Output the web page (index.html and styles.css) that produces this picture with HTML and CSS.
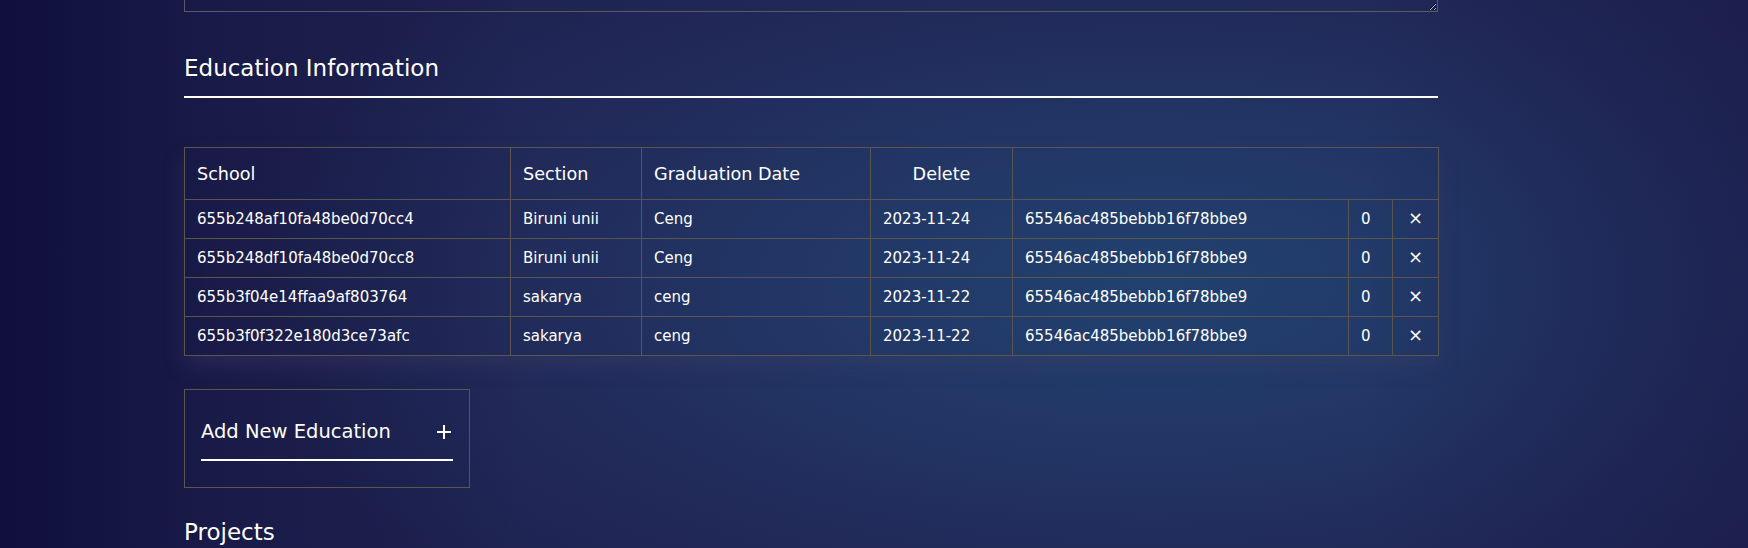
FILE: index.html
```html
<!DOCTYPE html>
<html lang="en">
<head>
<meta charset="utf-8">
<title>Education Information</title>
<link rel="stylesheet" href="styles.css">
</head>
<body>
<main class="page">
  <textarea class="notes" aria-label="Notes"></textarea>

  <h2 class="section-title">Education Information</h2>

  <table class="edu-table">
    <colgroup>
      <col class="c-school">
      <col class="c-section">
      <col class="c-grad">
      <col class="c-delete">
      <col class="c-user">
      <col class="c-count">
      <col class="c-x">
    </colgroup>
    <thead>
      <tr>
        <th>School</th>
        <th>Section</th>
        <th>Graduation Date</th>
        <th class="center">Delete</th>
        <th colspan="3"></th>
      </tr>
    </thead>
    <tbody>
      <tr>
        <td>655b248af10fa48be0d70cc4</td>
        <td>Biruni unii</td>
        <td>Ceng</td>
        <td>2023-11-24</td>
        <td>65546ac485bebbb16f78bbe9</td>
        <td>0</td>
        <td class="center"><span class="del">×</span></td>
      </tr>
      <tr>
        <td>655b248df10fa48be0d70cc8</td>
        <td>Biruni unii</td>
        <td>Ceng</td>
        <td>2023-11-24</td>
        <td>65546ac485bebbb16f78bbe9</td>
        <td>0</td>
        <td class="center"><span class="del">×</span></td>
      </tr>
      <tr>
        <td>655b3f04e14ffaa9af803764</td>
        <td>sakarya</td>
        <td>ceng</td>
        <td>2023-11-22</td>
        <td>65546ac485bebbb16f78bbe9</td>
        <td>0</td>
        <td class="center"><span class="del">×</span></td>
      </tr>
      <tr>
        <td>655b3f0f322e180d3ce73afc</td>
        <td>sakarya</td>
        <td>ceng</td>
        <td>2023-11-22</td>
        <td>65546ac485bebbb16f78bbe9</td>
        <td>0</td>
        <td class="center"><span class="del">×</span></td>
      </tr>
    </tbody>
  </table>

  <div class="add-box">
    <div class="add-btn">
      <span class="add-label">Add New Education</span>
      <svg class="plus" width="16" height="16" viewBox="0 0 16 16" aria-hidden="true">
        <line x1="8" y1="1" x2="8" y2="15" stroke="#fff" stroke-width="2"/>
        <line x1="1" y1="8" x2="15" y2="8" stroke="#fff" stroke-width="2"/>
      </svg>
    </div>
  </div>

  <h2 class="section-title plain">Projects</h2>
</main>
</body>
</html>
```

FILE: styles.css
```css
html, body {
  margin: 0;
  padding: 0;
  height: 100%;
  overflow: hidden;
}

body {
  font-family: "DejaVu Sans", "Liberation Sans", sans-serif;
  color: #ffffff;
  background-color: #1b1d4b;
  background-image:
    linear-gradient(90deg, rgba(14, 12, 55, 0.85) 0%, rgba(14, 12, 55, 0.35) 12%, rgba(14, 12, 55, 0) 30%, rgba(14, 12, 55, 0) 78%, rgba(24, 24, 70, 0.45) 100%),
    radial-gradient(ellipse 55% 75% at 66% 52%, #21416f 0%, #223766 35%, #212a59 70%, #1e2250 100%);
}

.page {
  padding-left: 184px;
  width: 1254px;
  display: flex;
  flex-direction: column;
  align-items: flex-start;
}

.notes {
  display: block;
  box-sizing: border-box;
  width: 1254px;
  height: 100px;
  margin: -88px 0 0 0;
  background: transparent;
  border: 1px solid #5a5a66;
  color: #fff;
  resize: vertical;
}

.section-title {
  box-sizing: border-box;
  width: 1254px;
  margin: 42px 0 0 0;
  padding-bottom: 14px;
  font-size: 23px;
  line-height: 28px;
  font-weight: normal;
  border-bottom: 2px solid #ffffff;
}

.section-title.plain {
  margin-top: 30px;
  border-bottom: none;
  padding-bottom: 0;
}

.edu-table {
  margin-top: 49px;
  width: 1254px;
  table-layout: fixed;
  border-collapse: collapse;
  box-shadow: 0 10px 18px rgba(70, 62, 96, 0.35);
}

.c-school { width: 326px; }
.c-section { width: 131px; }
.c-grad { width: 229px; }
.c-delete { width: 142px; }
.c-user { width: 336px; }
.c-count { width: 44px; }
.c-x { width: 46px; }

.edu-table th,
.edu-table td {
  border: 1px solid #5a564f;
  padding: 0 12px;
  text-align: left;
  white-space: nowrap;
  overflow: hidden;
}

.edu-table th {
  height: 51px;
  font-size: 17.6px;
  font-weight: normal;
}

.edu-table td {
  height: 38px;
  font-size: 15px;
}

.edu-table .center {
  text-align: center;
}

.del {
  display: inline-block;
  font-size: 18px;
  line-height: 1;
  transform: translateY(-1px);
}

.add-box {
  margin-top: 33px;
  box-sizing: border-box;
  width: 286px;
  padding: 30px 16px 26px 16px;
  border: 1px solid #5a564f;
}

.add-btn {
  display: flex;
  align-items: center;
  justify-content: space-between;
  padding-bottom: 16px;
  border-bottom: 2px solid #ffffff;
}

.add-label {
  font-size: 19.5px;
  line-height: 23px;
}

.plus {
  display: block;
  margin-right: 1px;
}
```
